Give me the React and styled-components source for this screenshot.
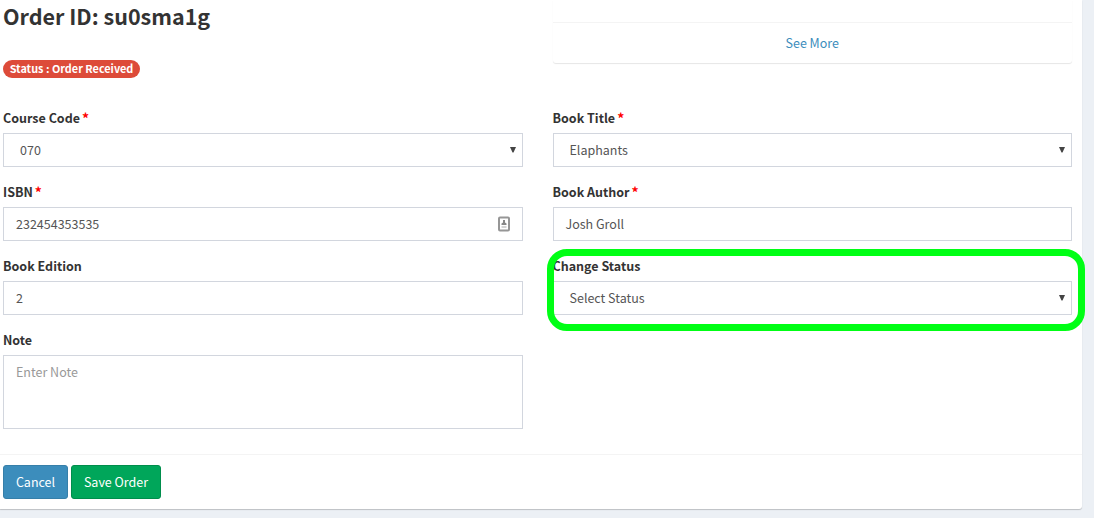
import React from "react";
import styled, { createGlobalStyle } from "styled-components";

const GlobalStyle = createGlobalStyle`
  *, *::after { box-sizing: border-box; }
  body {
    margin: 0;
    height: 518px;
    overflow: hidden;
    background: #ecf0f5;
    color: #333;
    font-family: "Source Sans Pro", "Noto Sans CJK SC", "Open Sans", sans-serif;
    font-size: 12.5px;
    line-height: 20px;
  }
`;

const Box = styled.main`
  width: 1082px;
  height: 509px;
  background: #fff;
  border-radius: 0 0 3px 0;
  box-shadow: 0 1px 1px rgba(0, 0, 0, 0.2);
`;

const Columns = styled.div`
  display: grid;
  grid-template-columns: 519.5px 519.5px;
  column-gap: 30px;
  padding: 0 10px 0 3px;
`;

const Top = styled(Columns)`
  height: 108px;
`;

const Title = styled.h3`
  margin: 0;
  padding-top: 3px;
  font-size: 21.5px;
  line-height: 26px;
  font-weight: 700;
`;

const Badge = styled.span`
  display: block;
  width: 137px;
  height: 18px;
  margin-top: 31px;
  border-radius: 9px;
  background: #dd4b39;
  color: #fff;
  font-size: 10.85px;
  line-height: 16px;
  font-weight: 700;
  text-align: center;
  white-space: nowrap;
`;

const Panel = styled.section`
  height: 63px;
  padding-top: 22px;
  border-radius: 0 0 3px 3px;
  box-shadow: 0 1px 1px rgba(0, 0, 0, 0.1);
`;

const PanelFooter = styled.div`
  height: 41px;
  padding-top: 10px;
  border-top: 1px solid #f4f4f4;
  text-align: center;
`;

const Link = styled.a`
  color: #3c8dbc;
`;

const Fields = styled(Columns)`
  height: 346px;
  align-items: start;
`;

const Group = styled.div`
  margin-bottom: 15px;
`;

const Label = styled.label`
  display: block;
  height: 20px;
  margin-bottom: 5px;
  font-weight: 700;
`;

const Required = styled.span`
  margin-left: 2px;
  color: #f00;
  font-size: 14px;
  line-height: 1;
  vertical-align: -1px;
`;

const Control = styled.div`
  display: flex;
  justify-content: space-between;
  align-items: ${(p) => (p.$tall ? "flex-start" : "center")};
  height: ${(p) => (p.$tall ? 74 : 34)}px;
  padding: ${(p) => (p.$tall ? "6px 12px" : p.$select ? "0 6px 0 16px" : "0 12px")};
  border: 1px solid #d2d6de;
  background: #fff;
  color: ${(p) => (p.$tall ? "#999" : "#555")};
`;

const Highlighted = styled(Group)`
  position: relative;
  &::after {
    content: "";
    position: absolute;
    left: -6px;
    top: -7px;
    width: 538px;
    height: 82px;
    border: 7px solid #00ff15;
    border-radius: 20px;
  }
`;

const Footer = styled.footer`
  display: flex;
  gap: 3px;
  padding: 10px 3px;
  border-top: 1px solid #f4f4f4;
`;

const Button = styled.button`
  width: ${(p) => p.$width}px;
  height: 34px;
  padding: 0;
  border: 1px solid ${(p) => (p.$save ? "#008d4c" : "#367fa9")};
  border-radius: 3px;
  background: ${(p) => (p.$save ? "#00a65a" : "#3c8dbc")};
  color: #fff;
  font: inherit;
`;

const Arrow = () => (
  <svg width="6" height="6" viewBox="0 0 6 6">
    <path d="M0 0H6L3.5 5.5H2.5Z" fill="#444" />
  </svg>
);

const ContactIcon = () => (
  <svg width="12" height="16" viewBox="0 0 12 16">
    <rect x="1" y="1.5" width="10" height="13" rx="1" fill="#fff" stroke="#969696" strokeWidth="2" />
    <rect x="5" y="4" width="2" height="3" fill="#888" />
    <path d="M3.5 9V7.5L5 6.5H7L8.5 7.5V9Z" fill="#888" />
    <path d="M3.5 11H8.5" stroke="#aaa" />
  </svg>
);

function Field({ label, required, value, select, tall, icon, as: Wrap = Group }) {
  return (
    <Wrap>
      <Label>
        {label}
        {required && <Required>*</Required>}
      </Label>
      <Control $select={select} $tall={tall}>
        <span>{value}</span>
        {select && <Arrow />}
        {icon}
      </Control>
    </Wrap>
  );
}

export default function App() {
  return (
    <>
      <GlobalStyle />
      <Box>
        <Top>
          <div>
            <Title>Order ID: su0sma1g</Title>
            <Badge>Status : Order Received</Badge>
          </div>
          <Panel>
            <PanelFooter>
              <Link>See More</Link>
            </PanelFooter>
          </Panel>
        </Top>
        <Fields>
          <div>
            <Field label="Course Code" required value="070" select />
            <Field label="ISBN" required value="232454353535" icon={<ContactIcon />} />
            <Field label="Book Edition" value="2" />
            <Field label="Note" value="Enter Note" tall />
          </div>
          <div>
            <Field label="Book Title" required value="Elaphants" select />
            <Field label="Book Author" required value="Josh Groll" />
            <Field as={Highlighted} label="Change Status" value="Select Status" select />
          </div>
        </Fields>
        <Footer>
          <Button $width={65}>Cancel</Button>
          <Button $width={90} $save>Save Order</Button>
        </Footer>
      </Box>
    </>
  );
}
